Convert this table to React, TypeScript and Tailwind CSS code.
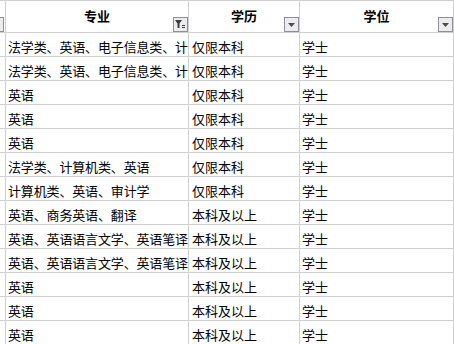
import React from 'react';

const rows: [string, string, string][] = [
  ['法学类、英语、电子信息类、计', '仅限本科', '学士'],
  ['法学类、英语、电子信息类、计', '仅限本科', '学士'],
  ['英语', '仅限本科', '学士'],
  ['英语', '仅限本科', '学士'],
  ['英语', '仅限本科', '学士'],
  ['法学类、计算机类、英语', '仅限本科', '学士'],
  ['计算机类、英语、审计学', '仅限本科', '学士'],
  ['英语、商务英语、翻译', '本科及以上', '学士'],
  ['英语、英语语言文学、英语笔译', '本科及以上', '学士'],
  ['英语、英语语言文学、英语笔译', '本科及以上', '学士'],
  ['英语', '本科及以上', '学士'],
  ['英语', '本科及以上', '学士'],
  ['英语', '本科及以上', '学士'],
];

function DropButton({ filtered }: { filtered?: boolean }) {
  return (
    <div className="absolute right-0 bottom-0 w-[15px] h-[15px] bg-[#ececec] border border-[#8f8f9c] flex items-center justify-center">
      {filtered ? (
        <svg width="11" height="9" viewBox="0 0 11 9">
          <path d="M0 0h7L4.5 3.5V8h-2V3.5z" fill="#3c3c3c" />
          <rect x="7" y="5" width="3" height="1" fill="#3c3c3c" />
          <rect x="7" y="7" width="3" height="1" fill="#3c3c3c" />
        </svg>
      ) : (
        <svg width="7" height="4" viewBox="0 0 7 4">
          <path d="M0 0h7L3.5 4z" fill="#4a4a4a" />
        </svg>
      )}
    </div>
  );
}

export default function App() {
  const font = { fontFamily: '"SimSun", "Noto Sans CJK SC", sans-serif' };
  return (
    <div className="w-[454px] h-[344px] overflow-hidden bg-white text-black" style={font}>
      <div className="grid grid-cols-[6px_183px_111px_154px]">
        {/* header */}
        <div className="relative h-[33px] border-t border-b border-r border-[#d0d0d0]">
          <div className="absolute right-[1px] bottom-0 w-[4px] h-[15px] bg-[#ececec] border border-l-0 border-[#8f8f9c]" />
        </div>
        <div className="relative h-[33px] border-t border-b border-r border-[#d0d0d0] flex items-center justify-center text-[13px] font-bold pb-[1px]">
          专业
          <DropButton filtered />
        </div>
        <div className="relative h-[33px] border-t border-b border-r border-[#d0d0d0] flex items-center justify-center text-[13px] font-bold pb-[1px]">
          学历
          <DropButton />
        </div>
        <div className="relative h-[33px] border-t border-b border-r border-[#d0d0d0] flex items-center justify-center text-[13px] font-bold pb-[1px]">
          学位
          <DropButton />
        </div>

        {rows.map((r, i) => (
          <React.Fragment key={i}>
            <div className="h-[24px] border-b border-r border-[#d0d0d0]" />
            <div className="h-[24px] border-b border-r border-[#d0d0d0] pl-[2px] flex items-end pb-[2px] text-[13px] leading-[15px] tracking-[-0.15px] whitespace-nowrap overflow-hidden">
              {r[0]}
            </div>
            <div className="h-[24px] border-b border-r border-[#d0d0d0] pl-[3px] flex items-end pb-[2px] text-[13px] leading-[15px] whitespace-nowrap overflow-hidden">
              {r[1]}
            </div>
            <div className="h-[24px] border-b border-r border-[#d0d0d0] pl-[2px] flex items-end pb-[2px] text-[13px] leading-[15px] whitespace-nowrap overflow-hidden">
              {r[2]}
            </div>
          </React.Fragment>
        ))}
      </div>
    </div>
  );
}
